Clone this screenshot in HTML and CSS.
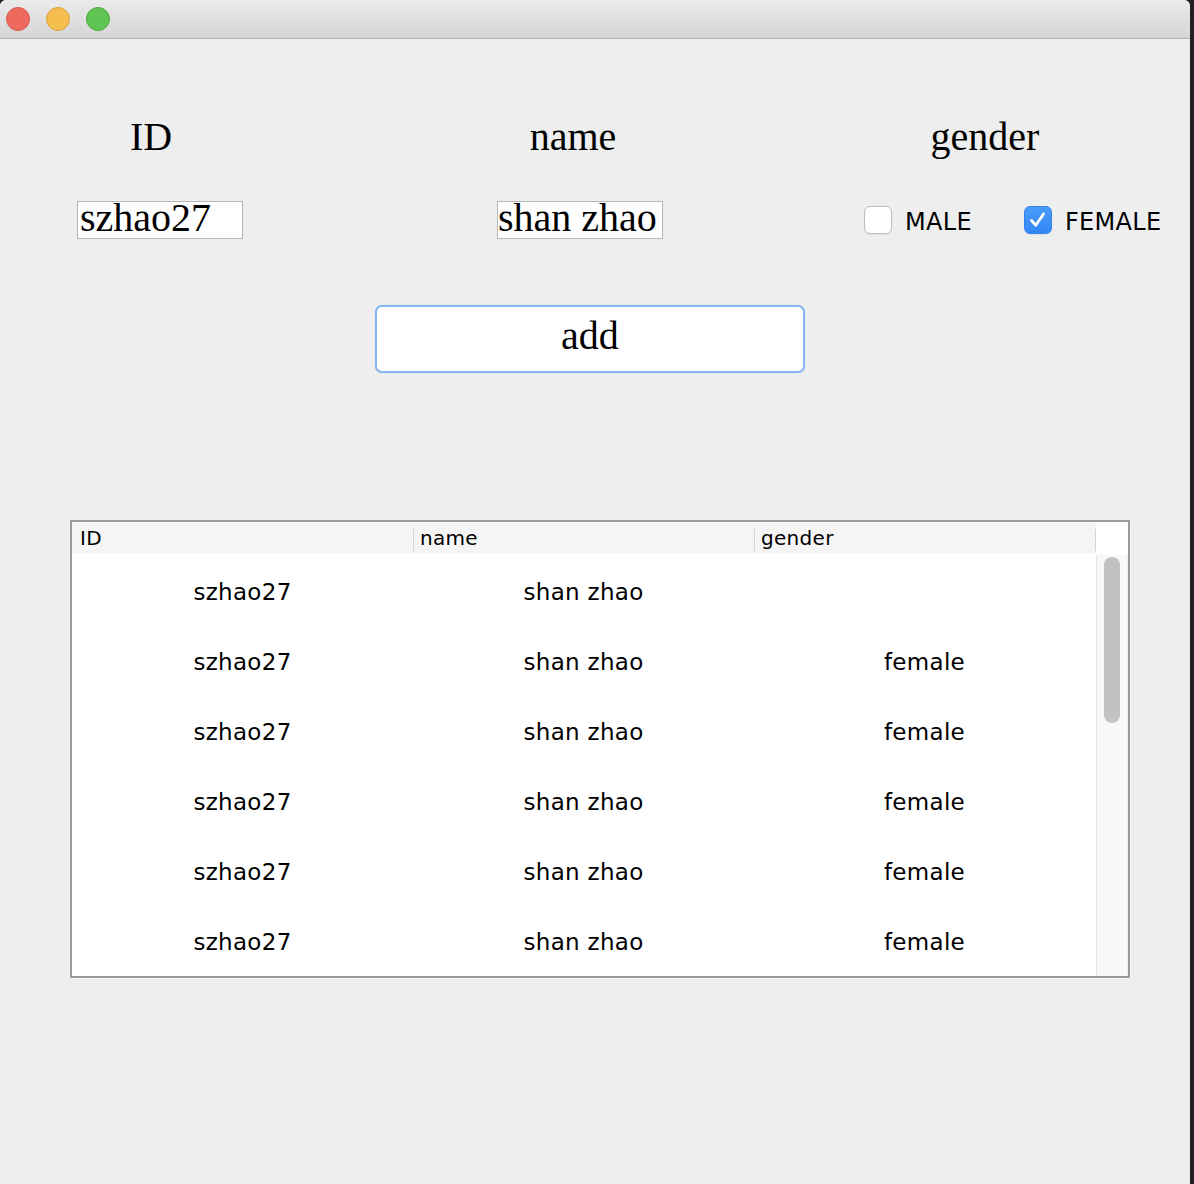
FILE: index.html
```html
<!DOCTYPE html>
<html>
<head>
<meta charset="utf-8">
<link rel="stylesheet" href="styles.css">
</head>
<body>
<div class="window">
  <div class="titlebar">
    <span class="light red"></span>
    <span class="light yellow"></span>
    <span class="light green"></span>
  </div>
  <div class="labels">
    <div class="label label-id">ID</div>
    <div class="label label-name">name</div>
    <div class="label label-gender">gender</div>
  </div>
  <div class="fields">
    <div class="field field-id">szhao27</div>
    <div class="field field-name">shan zhao</div>
    <div class="option option-first">
      <span class="check"></span>
      <span class="opt-text">MALE</span>
    </div>
    <div class="option">
      <span class="check checked">
        <svg width="28" height="28" viewBox="0 0 28 28"><path d="M7.5 14.5 L11.8 19.2 L19.5 8" fill="none" stroke="#fff" stroke-width="2.8" stroke-linecap="round" stroke-linejoin="round"/></svg>
      </span>
      <span class="opt-text">FEMALE</span>
    </div>
  </div>
  <div class="button-row">
    <div class="add-btn">add</div>
  </div>
  <div class="table">
    <div class="tmain">
      <div class="thead">
        <div class="th th1">ID</div>
        <div class="tdiv"></div>
        <div class="th th2">name</div>
        <div class="tdiv"></div>
        <div class="th th3">gender</div>
        <div class="tdiv"></div>
      </div>
      <div class="tbody">
        <div class="tr"><div class="td">szhao27</div><div class="td">shan zhao</div><div class="td"></div></div>
        <div class="tr"><div class="td">szhao27</div><div class="td">shan zhao</div><div class="td">female</div></div>
        <div class="tr"><div class="td">szhao27</div><div class="td">shan zhao</div><div class="td">female</div></div>
        <div class="tr"><div class="td">szhao27</div><div class="td">shan zhao</div><div class="td">female</div></div>
        <div class="tr"><div class="td">szhao27</div><div class="td">shan zhao</div><div class="td">female</div></div>
        <div class="tr"><div class="td">szhao27</div><div class="td">shan zhao</div><div class="td">female</div></div>
      </div>
    </div>
    <div class="tscroll">
      <div class="scroll-top"></div>
      <div class="track"><div class="thumb"></div></div>
    </div>
  </div>
</div>
</body>
</html>
```
FILE: styles.css
```css
html, body {
  margin: 0;
  padding: 0;
}
body {
  background: #1f1f1f;
  width: 1194px;
  height: 1184px;
  overflow: hidden;
}
.window {
  width: 1190px;
  height: 1184px;
  background: #eeeeee;
  border-top-right-radius: 6px;
  border-top-left-radius: 6px;
  overflow: hidden;
}
.titlebar {
  height: 38px;
  border-bottom: 1px solid #b4b4b4;
  background: linear-gradient(#ebebeb, #d5d5d5);
  display: flex;
  align-items: center;
  gap: 16px;
  padding-left: 6px;
}
.light {
  width: 24px;
  height: 24px;
  box-sizing: border-box;
  border-radius: 50%;
  display: block;
}
.red { background: #ee6a5f; border: 1px solid #d8564b; }
.yellow { background: #f6be4f; border: 1px solid #d9a23d; }
.green { background: #61c554; border: 1px solid #4ca63f; }

.labels {
  display: flex;
  margin-top: 75px;
}
.label {
  width: 200px;
  text-align: center;
  font: 40px/46px "Liberation Serif", serif;
  color: #000;
}
.label-id { margin-left: 51px; }
.label-name { margin-left: 222px; }
.label-gender { margin-left: 212px; }

.fields {
  display: flex;
  align-items: center;
  margin-top: 41px;
}
.field {
  box-sizing: border-box;
  width: 166px;
  height: 38px;
  border: 1px solid #b7b7b7;
  background: #fff;
  font: 40px/31px "Liberation Serif", serif;
  color: #000;
  white-space: nowrap;
}
.field-id { margin-left: 77px; padding-left: 2px; }
.field-name { margin-left: 254px; padding-left: 0; }

.option {
  display: flex;
  align-items: center;
  width: 160px;
}
.option-first { margin-left: 201px; }
.check {
  box-sizing: border-box;
  width: 28px;
  height: 28px;
  border-radius: 6px;
  background: #fff;
  border: 1px solid #bdbdbd;
  box-shadow: 0 1px 1px rgba(0,0,0,0.06);
  display: block;
}
.check.checked {
  background: linear-gradient(#4a9cf9, #3287f4);
  border: 1px solid #3483ee;
}
.check svg {
  display: block;
  margin: -1px;
}
.opt-text {
  margin-left: 13px;
  font: 24px/28px "DejaVu Sans", sans-serif;
  letter-spacing: 0.3px;
  color: #000;
  padding-top: 3px;
}

.button-row {
  display: flex;
  margin-top: 66px;
}
.add-btn {
  margin-left: 375px;
  box-sizing: border-box;
  width: 430px;
  height: 68px;
  border: 2px solid #88b6ee;
  border-radius: 7px;
  background: #fff;
  box-shadow: 0 0 1px #9cc2f0;
  text-align: center;
  font: 40px/57px "Liberation Serif", serif;
  color: #000;
}

.table {
  margin-top: 147px;
  margin-left: 70px;
  box-sizing: border-box;
  width: 1060px;
  height: 458px;
  border: 2px solid #9b9b9b;
  background: #fff;
  display: flex;
  box-shadow: 1px 1px 0 #fafafa;
}
.tmain {
  width: 1024px;
  display: flex;
  flex-direction: column;
}
.thead {
  height: 31px;
  background: #f5f5f5;
  display: flex;
  align-items: center;
}
.th {
  font: 20px/31px "DejaVu Sans", sans-serif;
  color: #000;
  box-sizing: border-box;
  padding-top: 2px;
  letter-spacing: 0.3px;
}
.th1 { width: 341px; padding-left: 8px; }
.th2 { width: 340px; padding-left: 6px; }
.th3 { width: 340px; padding-left: 6px; }
.tdiv {
  width: 1px;
  height: 22px;
  background: #d3d3d3;
  margin-top: 4px;
}
.tbody {
  padding-top: 4px;
  height: 419px;
  overflow: hidden;
}
.tr {
  display: grid;
  grid-template-columns: 341px 341px 341px;
  height: 70px;
}
.td {
  text-align: center;
  font: 23px/70px "DejaVu Sans", sans-serif;
  letter-spacing: 0.3px;
  color: #000;
}
.tscroll {
  width: 32px;
  display: flex;
  flex-direction: column;
}
.scroll-top {
  height: 33px;
  background: #fff;
}
.track {
  flex: 1;
  box-sizing: border-box;
  border-left: 1px solid #e4e4e4;
  border-right: 1px solid #efefef;
  background: #f8f8f8;
  padding: 2px 0 0 7px;
}
.thumb {
  width: 16px;
  height: 166px;
  border-radius: 8px;
  background: #c2c2c2;
}
```
